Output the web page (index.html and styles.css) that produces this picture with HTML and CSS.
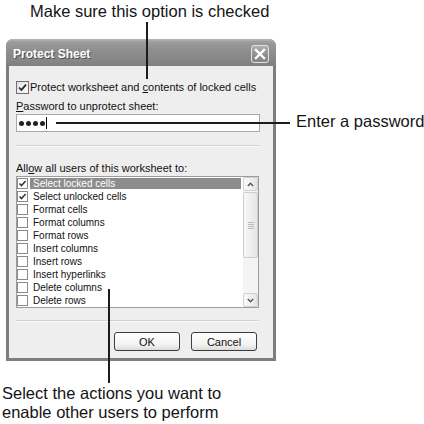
FILE: index.html
```html
<!DOCTYPE html>
<html lang="en">
<head>
<meta charset="utf-8">
<title>Protect Sheet</title>
<link rel="stylesheet" href="styles.css">
</head>
<body>
<div class="page">
  <div class="cap cap-top">Make sure this option is checked</div>

  <div class="dialog">
    <div class="titlebar">
      <span class="title">Protect Sheet</span>
      <span class="close">
        <svg width="16" height="16" viewBox="0 0 16 16"><path d="M4 4 L12 12 M12 4 L4 12" stroke="#fff" stroke-width="2.4" stroke-linecap="square" fill="none"/></svg>
      </span>
    </div>
    <div class="body">
      <div class="chk-row">
        <span class="chk"><svg width="11" height="11" viewBox="0 0 11 11"><polyline points="2,5.5 4.4,8 9,2.6" fill="none" stroke="#222" stroke-width="1.7"/></svg></span>
        <span class="chk-text">Protect worksheet and <u>c</u>ontents of locked cells</span>
      </div>
      <div class="label"><u>P</u>assword to unprotect sheet:</div>
      <div class="input">
        <span class="dot"></span><span class="dot"></span><span class="dot"></span><span class="dot"></span><span class="caret"></span>
      </div>
      <div class="sep"></div>
      <div class="label label-allow">All<u>o</u>w all users of this worksheet to:</div>
      <div class="list">
        <div class="items">
          <div class="item"><span class="lchk"><svg width="9" height="9" viewBox="0 0 9 9"><polyline points="1.5,4.5 3.5,6.6 7.6,2" fill="none" stroke="#333" stroke-width="1.5"/></svg></span><span class="txt sel">Select locked cells</span></div>
          <div class="item"><span class="lchk"><svg width="9" height="9" viewBox="0 0 9 9"><polyline points="1.5,4.5 3.5,6.6 7.6,2" fill="none" stroke="#333" stroke-width="1.5"/></svg></span><span class="txt">Select unlocked cells</span></div>
          <div class="item"><span class="lchk"></span><span class="txt">Format cells</span></div>
          <div class="item"><span class="lchk"></span><span class="txt">Format columns</span></div>
          <div class="item"><span class="lchk"></span><span class="txt">Format rows</span></div>
          <div class="item"><span class="lchk"></span><span class="txt">Insert columns</span></div>
          <div class="item"><span class="lchk"></span><span class="txt">Insert rows</span></div>
          <div class="item"><span class="lchk"></span><span class="txt">Insert hyperlinks</span></div>
          <div class="item"><span class="lchk"></span><span class="txt">Delete columns</span></div>
          <div class="item"><span class="lchk"></span><span class="txt">Delete rows</span></div>
        </div>
        <div class="sbar">
          <div class="sbtn"><svg width="7" height="5" viewBox="0 0 7 5"><polyline points="0.8,4 3.5,1.3 6.2,4" fill="none" stroke="#555" stroke-width="1.4"/></svg></div>
          <div class="thumb"><span class="grip"></span></div>
          <div class="track"></div>
          <div class="sbtn"><svg width="7" height="5" viewBox="0 0 7 5"><polyline points="0.8,1 3.5,3.7 6.2,1" fill="none" stroke="#555" stroke-width="1.4"/></svg></div>
        </div>
      </div>
      <div class="sep sep-bottom"></div>
      <div class="buttons">
        <div class="btn">OK</div>
        <div class="btn">Cancel</div>
      </div>
    </div>
  </div>

  <div class="cap cap-bottom">Select the actions you want to<br>enable other users to perform</div>

  <div class="callout line-top"></div>
  <div class="callout line-pass"></div>
  <div class="callout line-list"></div>
  <div class="cap cap-right">Enter a password</div>
</div>
</body>
</html>
```

FILE: styles.css
```css
html, body {
  margin: 0;
  padding: 0;
  background: #fff;
}

.page {
  position: relative;
  width: 424px;
  height: 424px;
  overflow: hidden;
  font-family: "Liberation Sans", Arial, sans-serif;
  color: #111;
}

.cap {
  font-size: 16.5px;
  line-height: 19px;
  color: #141414;
  white-space: nowrap;
}

.cap-top {
  padding: 2px 0 0 30px;
  height: 19px;
}

.cap-bottom {
  margin-top: 23px;
  padding-left: 2px;
  line-height: 18.5px;
}

.cap-right {
  position: absolute;
  left: 296px;
  top: 112px;
}

.callout {
  position: absolute;
  background: #1c1c1c;
}

.line-top {
  left: 146px;
  top: 22px;
  width: 2px;
  height: 57px;
}

.line-pass {
  left: 56px;
  top: 122px;
  width: 234px;
  height: 2px;
}

.line-list {
  left: 108px;
  top: 289px;
  width: 2px;
  height: 94px;
}

/* dialog */
.dialog {
  margin: 18px 0 0 6px;
  width: 270px;
  box-sizing: border-box;
  padding: 0 3px 3px;
  background: #7e7e7e;
  border-radius: 7px 7px 0 0;
  overflow: hidden;
}

.titlebar {
  margin: 0 -3px;
  height: 27px;
  display: flex;
  align-items: flex-start;
  justify-content: space-between;
  padding: 0 7px;
  background: linear-gradient(to bottom, #b9b9b9 0, #9c9c9c 3px, #909090 40%, #868686 80%, #7e7e7e 100%);
}

.title {
  margin-top: 8px;
  font-size: 12px;
  line-height: 14px;
  font-weight: bold;
  color: #fff;
  text-shadow: 1px 1px 0 #505050;
}

.close {
  margin-top: 6px;
  width: 18px;
  height: 18px;
  box-sizing: border-box;
  border: 1px solid #e2e2e2;
  border-radius: 3px;
  background: linear-gradient(to bottom, #b0b0b0, #8e8e8e 60%, #858585);
  display: flex;
  align-items: center;
  justify-content: center;
}

.body {
  background: #eeeeee;
  padding: 15px 0 7px 7px;
  font-size: 11px;
}

.chk-row {
  display: flex;
  align-items: center;
  height: 13px;
  line-height: 13px;
}

.chk {
  width: 13px;
  height: 13px;
  box-sizing: border-box;
  border: 1px solid #6e6e6e;
  background: linear-gradient(135deg, #e2e2e2, #fbfbfb);
  display: flex;
  align-items: center;
  justify-content: center;
  margin-right: 1px;
}

.label {
  margin-top: 6px;
  height: 13px;
  line-height: 13px;
}

.label-allow {
  margin-top: 15px;
}

.input {
  margin-top: 1px;
  width: 244px;
  height: 18px;
  box-sizing: border-box;
  border: 1px solid #a8a8a8;
  background: #fff;
  display: flex;
  align-items: center;
  padding-left: 2px;
}

.dot {
  width: 5px;
  height: 5px;
  border-radius: 50%;
  background: #222;
  margin-right: 2px;
}

.dot:nth-child(4) {
  margin-right: 1px;
}

.caret {
  width: 1px;
  height: 12px;
  background: #000;
}

.sep {
  margin-top: 13px;
  width: 243px;
  border-top: 1px solid #cfcfcf;
  border-bottom: 1px solid #fafafa;
}

.sep-bottom {
  margin-top: 12px;
}

.list {
  margin-top: 1px;
  width: 243px;
  height: 132px;
  box-sizing: border-box;
  border: 1px solid #9c9c9c;
  background: #fff;
  display: flex;
}

.items {
  flex: 1;
  font-size: 10px;
}

.item {
  height: 13px;
  display: flex;
  align-items: center;
}

.lchk {
  width: 11px;
  height: 11px;
  box-sizing: border-box;
  border: 1px solid #8a8a8a;
  background: #fff;
  display: flex;
  align-items: center;
  justify-content: center;
  margin-right: 2px;
}

.txt {
  flex: 1;
  height: 11px;
  line-height: 11px;
  padding-left: 3px;
  margin-right: 2px;
  white-space: nowrap;
}

.txt.sel {
  background: #8d8d8d;
  color: #fff;
}

.sbar {
  width: 15px;
  display: flex;
  flex-direction: column;
  background: #f4f4f4;
}

.sbtn {
  height: 14px;
  box-sizing: border-box;
  border: 1px solid #d0d0d0;
  border-radius: 2px;
  background: linear-gradient(to right, #fbfbfb, #e4e4e4);
  display: flex;
  align-items: center;
  justify-content: center;
}

.thumb {
  margin-top: 1px;
  height: 66px;
  box-sizing: border-box;
  border: 1px solid #cdcdcd;
  border-radius: 2px;
  background: linear-gradient(to right, #f7f7f7, #e6e6e6);
  display: flex;
  align-items: center;
  justify-content: center;
}

.grip {
  width: 6px;
  height: 7px;
  background: repeating-linear-gradient(to bottom, #bdbdbd 0, #bdbdbd 1px, transparent 1px, transparent 2px);
}

.track {
  flex: 1;
}

.buttons {
  margin-top: 10px;
  display: flex;
  justify-content: flex-end;
  gap: 11px;
  padding-right: 16px;
}

.btn {
  width: 66px;
  height: 19px;
  box-sizing: border-box;
  border: 1px solid #3d3d3d;
  border-radius: 3px;
  background: linear-gradient(to bottom, #ffffff, #f2f2f2 70%, #dadada);
  display: flex;
  align-items: center;
  justify-content: center;
  font-size: 11px;
  color: #111;
}
```
